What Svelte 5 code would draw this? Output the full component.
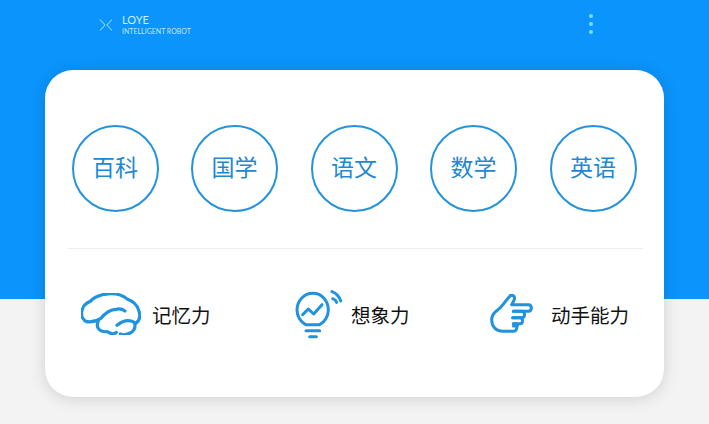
<script>
  const subjects = ['百科', '国学', '语文', '数学', '英语'];
</script>

<div class="page">
  <header class="top">
    <div class="brand">
      <svg class="logo" width="14" height="14" viewBox="0 0 14 14" fill="none" stroke="#7fdcf5" stroke-width="1.1">
        <path d="M1 1.500 6 7 1 12.500M13 1.500 8 7 13 12.500" />
      </svg>
      <div class="brand-text">
        <div class="name">LOYE</div>
        <div class="tag">INTELLIGENT ROBOT</div>
      </div>
    </div>
    <div class="dots"><i></i><i></i><i></i></div>
  </header>

  <main class="card">
    <div class="subjects">
      {#each subjects as s}
        <div class="circle"><span>{s}</span></div>
      {/each}
    </div>
    <div class="rule"></div>
    <div class="skills">
      <div class="skill s1">
        <svg width="60" height="42" viewBox="0 0 180 126" fill="none" stroke="#1f93e0" stroke-width="9.500" stroke-linecap="round" stroke-linejoin="round">
          <path d="M18 86C-6 78-4 38 28 25 50 0 110-8 140 19 175 31 186 74 166 90" />
          <path d="M18 86C34 88 50 82 60 76 72 61 90 48 102 50 112 46 124 48 132 54" />
          <path d="M52 84C42 105 58 118 78 116 88 122 100 124 106 118" />
          <path d="M108 97C124 84 142 78 160 88 166 105 158 120 136 124 130 126 124 126 118 123" />
        </svg>
        <span>记忆力</span>
      </div>
      <div class="skill s2">
        <svg width="47" height="50" viewBox="30 25 141 150" fill="none" stroke="#1f93e0" stroke-width="9" stroke-linecap="round" stroke-linejoin="round">
          <path d="M62 132C46 124 36 106 36 88 36 60 57 38 84 38 110 38 130 60 130 88 130 106 120 124 104 132Z" />
          <path d="M53 102 70 85 86 100 111 72" />
          <path d="M63 150H104" />
          <path d="M74 168H94" />
          <path d="M141 33C154 38 163 48 167 61" />
          <path d="M143 54C149 56 153 60 155 65" />
        </svg>
        <span>想象力</span>
      </div>
      <div class="skill s3">
        <svg width="43" height="39" viewBox="30 45 129 117" fill="none" stroke="#1f93e0" stroke-width="9" stroke-linecap="round" stroke-linejoin="round">
          <path d="M92 49C78 62 70 80 54 92 42 100 35 108 35 122 35 142 48 157 68 157H98C108 157 112 150 110 141" />
          <path d="M92 49C102 47 106 56 102 64L95 77H145C157 77 157 97 145 97H100" />
          <path d="M100 97H126C136 97 136 116 126 116H98" />
          <path d="M98 116H120C130 116 130 134 120 134H100" />
          <path d="M100 134H106C114 134 114 141 110 141H100" />
        </svg>
        <span>动手能力</span>
      </div>
    </div>
  </main>
</div>

<style>
  :global(body) {
    margin: 0;
  }
  .page {
    width: 709px;
    height: 424px;
    overflow: hidden;
    background: linear-gradient(#0b94fb 0 299px, #f3f3f3 299px);
    font-family: "Noto Sans CJK SC", "Noto Sans", sans-serif;
  }
  .top {
    height: 70px;
    box-sizing: border-box;
    padding: 13px 116px 0 99px;
    display: flex;
    justify-content: space-between;
    align-items: flex-start;
  }
  .brand {
    display: flex;
    align-items: center;
    gap: 9px;
  }
  .logo {
    margin-top: 1px;
  }
  .name {
    font: 11px/13px "Lato", sans-serif;
    color: #cfeefc;
  }
  .tag {
    font: 7px/9px "Lato", sans-serif;
    color: #bfe6fb;
    margin-top: 1px;
  }
  .dots {
    display: flex;
    flex-direction: column;
    gap: 4px;
    padding-top: 1px;
  }
  .dots i {
    width: 4px;
    height: 4px;
    border-radius: 50%;
    background: #79dcf9;
  }
  .card {
    margin-left: 45px;
    width: 619px;
    height: 327px;
    box-sizing: border-box;
    background: #fff;
    border-radius: 28px;
    box-shadow: 0 2px 16px rgba(0, 0, 0, 0.14);
    padding-top: 55px;
  }
  .subjects {
    display: flex;
    justify-content: space-between;
    padding: 0 27.500px 0 26.500px;
  }
  .circle {
    width: 87px;
    height: 87px;
    box-sizing: border-box;
    border: 2px solid #2493dc;
    border-radius: 50%;
    display: flex;
    align-items: center;
    justify-content: center;
    color: #1e88d4;
    font-size: 23px;
  }
  .circle span {
    line-height: 1;
    margin-top: -4px;
  }
  .rule {
    height: 1px;
    background: #eeeeee;
    margin: 36px 21px 0 23px;
  }
  .skills {
    display: flex;
    padding-top: 46px;
    height: 40px;
  }
  .skill {
    display: flex;
    align-items: center;
    height: 40px;
    font-size: 19.500px;
    color: #111;
  }
  .skill svg {
    margin-bottom: 3px;
  }
  .skill span {
    line-height: 1;
    margin-top: -1px;
  }
  .s1 {
    margin-left: 36px;
    gap: 11px;
  }
  .s2 {
    margin-left: 84.500px;
    gap: 9px;
  }
  .s3 {
    margin-left: 80.500px;
    gap: 18px;
  }
</style>
